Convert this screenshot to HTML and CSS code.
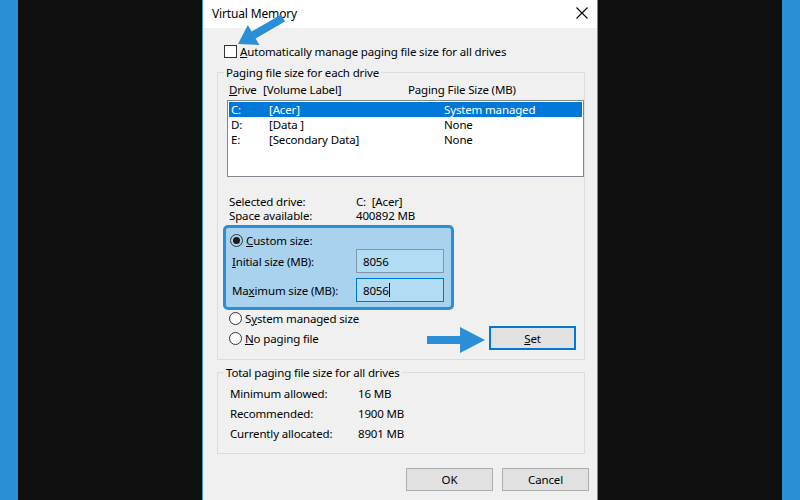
FILE: index.html
```html
<!DOCTYPE html>
<html lang="en">
<head>
    <meta charset="UTF-8">
    <title>Virtual Memory</title>
    <link rel="stylesheet" href="styles.css">
</head>
<body>

<div class="frame">
    <div class="edge"></div>
    <div class="backdrop"></div>

    <div class="dialog">
        <div class="titlebar">
            <span>Virtual Memory</span>
            <svg class="close" width="12" height="12" viewBox="0 0 12 12">
                <path d="M0.5 0.5 L11.5 11.5 M11.5 0.5 L0.5 11.5" stroke="#000" stroke-width="1.1"/>
            </svg>
        </div>

        <div class="body">
            <div class="check-row">
                <span class="checkbox"></span>
                <span><u>A</u>utomatically manage paging file size for all drives</span>
            </div>

            <div class="group group-drives">
                <span class="legend">Paging file size for each drive</span>
                <div class="list-head">
                    <span class="col-drive"><u>D</u>rive</span>
                    <span class="col-label">[Volume Label]</span>
                    <span>Paging File Size (MB)</span>
                </div>
                <div class="listbox">
                    <div class="list-row selected">
                        <span class="col-drive">C:</span>
                        <span class="col-label">[Acer]</span>
                        <span>System managed</span>
                    </div>
                    <div class="list-row">
                        <span class="col-drive">D:</span>
                        <span class="col-label">[Data ]</span>
                        <span>None</span>
                    </div>
                    <div class="list-row">
                        <span class="col-drive">E:</span>
                        <span class="col-label">[Secondary Data]</span>
                        <span>None</span>
                    </div>
                </div>

                <div class="info">
                    <span>Selected drive:</span><span>C:&nbsp; [Acer]</span>
                    <span>Space available:</span><span>400892 MB</span>
                </div>

                <div class="custom-box">
                    <div class="radio-row">
                        <span class="radio checked"></span>
                        <span><u>C</u>ustom size:</span>
                    </div>
                    <div class="size-row">
                        <span><u>I</u>nitial size (MB):</span>
                        <div class="field">8056</div>
                    </div>
                    <div class="size-row">
                        <span>Ma<u>x</u>imum size (MB):</span>
                        <div class="field focused">8056<span class="caret"></span></div>
                    </div>
                </div>

                <div class="radio-row plain system-row">
                    <span class="radio"></span>
                    <span>S<u>y</u>stem managed size</span>
                </div>
                <div class="radio-row plain set-row">
                    <span class="radio"></span>
                    <span><u>N</u>o paging file</span>
                    <button class="btn btn-set"><u>S</u>et</button>
                </div>
            </div>

            <div class="group group-total">
                <span class="legend">Total paging file size for all drives</span>
                <div class="totals">
                    <span>Minimum allowed:</span><span>16 MB</span>
                    <span>Recommended:</span><span>1900 MB</span>
                    <span>Currently allocated:</span><span>8901 MB</span>
                </div>
            </div>

            <div class="actions">
                <button class="btn">OK</button>
                <button class="btn">Cancel</button>
            </div>
        </div>
    </div>

    <div class="backdrop"></div>
    <div class="edge"></div>

    <!-- annotation arrows drawn over the dialog -->
    <svg class="arrows" width="800" height="500" viewBox="0 0 800 500">
        <polygon fill="#2a8fd6" transform="translate(238,44) rotate(150)"
                 points="-52,-4 -18,-4 -18,-11.5 0,0 -18,11.5 -18,4 -52,4"/>
        <polygon fill="#2a8fd6" points="427,336 460,336 460,327 485,340 460,353 460,344 427,344"/>
    </svg>
</div>

</body>
</html>
```

FILE: styles.css
```css
body {
    margin: 0;
    background: #0f0f0f;
    font-family: "Noto Sans", "Open Sans", sans-serif;
    font-size: 11.5px;
    letter-spacing: -0.15px;
    color: #000;
    overflow: hidden;
}
.frame {
    position: relative;
    display: flex;
    height: 500px;
    overflow: hidden;
}
.edge {
    width: 18px;
    background: #2a90d6;
}
.backdrop {
    flex: 1;
    background: #0f0f0f;
}
.dialog {
    width: 394px;
    height: 520px;
    background: #f0f0f0;
    border-left: 1px solid #3d97d8;
    border-right: 1px solid #3d97d8;
}
.titlebar {
    height: 26px;
    background: #fff;
    display: flex;
    align-items: center;
    justify-content: space-between;
    padding: 0 9px 2px;
    font-size: 12px;
}
.body {
    padding: 16px 12px 0 14px;
}
.check-row {
    display: flex;
    align-items: center;
    gap: 3px;
    height: 15px;
    margin-left: 7px;
}
.checkbox {
    width: 11px;
    height: 11px;
    border: 1px solid #333;
    background: #fff;
}
.group {
    border: 1px solid #dcdcdc;
    padding: 0 0 9px 9px;
}
.group-drives {
    margin-top: 13px;
}
.legend {
    display: table;
    margin: -8px 0 0 -3px;
    padding: 0 2px;
    line-height: 15px;
    background: #f0f0f0;
}
.list-head, .list-row {
    display: flex;
    line-height: 15px;
    white-space: nowrap;
}
.list-head {
    margin-top: 2px;
    padding-left: 2px;
}
.list-head .col-drive { width: 34px; }
.list-head .col-label { width: 145px; }
.listbox {
    margin-top: 3px;
    height: 73px;
    border: 1px solid #828790;
    background: #fff;
    padding: 1px;
}
.list-row {
    padding-left: 2px;
}
.list-row .col-drive { width: 38px; }
.list-row .col-label { width: 175px; }
.list-row.selected {
    background: #0078d7;
    color: #fff;
}
.info {
    display: grid;
    grid-template-columns: 127px auto;
    line-height: 14px;
    margin-top: 18px;
    padding-left: 2px;
}
.custom-box {
    margin: 2px 0 0 -4px;
    width: 221px;
    border: 3px solid #2a8fd6;
    border-radius: 5px;
    background: #a8d2ee;
    padding: 5px 0 5px 4px;
}
.radio-row {
    display: flex;
    align-items: center;
    gap: 3px;
    height: 15px;
}
.radio {
    width: 11px;
    height: 11px;
    border: 1px solid #333;
    border-radius: 50%;
    background: #fff;
    display: flex;
    align-items: center;
    justify-content: center;
}
.radio.checked::after {
    content: "";
    width: 7px;
    height: 7px;
    border-radius: 50%;
    background: #1a1a1a;
}
.custom-box .radio {
    background: transparent;
}
.size-row {
    display: grid;
    grid-template-columns: 124px 88px;
    align-items: center;
    padding-left: 2px;
    margin-top: 1px;
}
.size-row + .size-row {
    margin-top: 5px;
}
.field {
    height: 22px;
    border: 1px solid #7f97a8;
    background: #b2dcf4;
    padding-left: 6px;
    display: flex;
    align-items: center;
}
.field.focused {
    border-color: #0078d7;
}
.caret {
    width: 1px;
    height: 14px;
    background: #000;
}
.radio-row.plain {
    margin-left: 2px;
}
.system-row {
    margin-top: 1px;
}
.set-row {
    height: 24px;
}
.btn {
    font-family: inherit;
    font-size: 11.5px;
    letter-spacing: -0.15px;
    color: #000;
    width: 87px;
    height: 23px;
    border: 1px solid #adadad;
    background: #e1e1e1;
    padding: 0;
}
.btn-set {
    margin-left: auto;
    margin-right: 8px;
    height: 24px;
    border: 2px solid #0078d7;
}
.group-total {
    margin-top: 12px;
}
.totals {
    display: grid;
    grid-template-columns: 128px auto;
    line-height: 20px;
    margin-top: 4px;
    padding-left: 3px;
}
.actions {
    display: flex;
    justify-content: flex-end;
    gap: 9px;
    margin: 14px -4px 0 0;
}
.arrows {
    position: absolute;
    left: 0;
    top: 0;
    pointer-events: none;
}
```
